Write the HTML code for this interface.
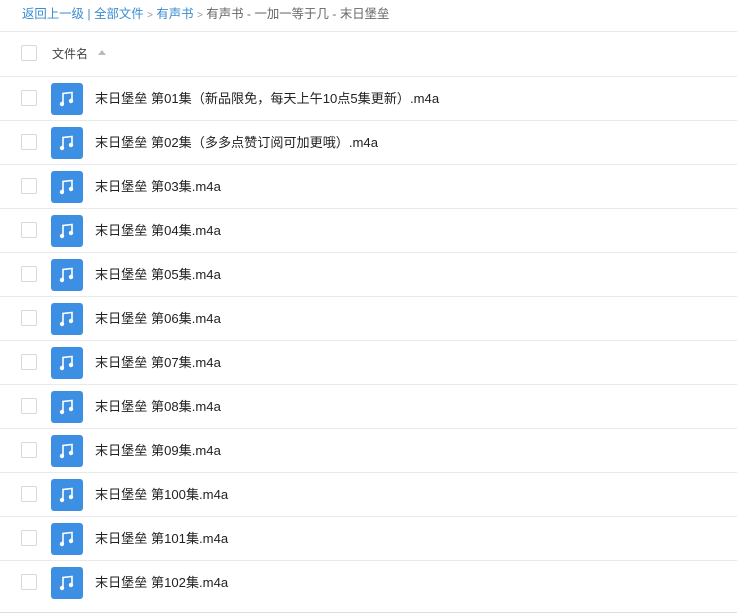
<!DOCTYPE html>
<html><head><meta charset="utf-8"><style>
body{margin:0;background:#fff;font-family:"Liberation Sans","Noto Sans CJK SC",sans-serif;width:737px;height:615px;overflow:hidden;position:relative}
.bc{position:absolute;left:22px;top:5px;font-size:12.4px;color:#666;line-height:18px}
.bc a{color:#3b8cd0;text-decoration:none}
.bc .s{color:#999;font-size:10px}
.hl{position:absolute;left:0;width:737px;height:1px;background:#eaeaea}
.cb{position:absolute;left:21px;width:14px;height:14px;border:1px solid #d8d8d8;border-radius:2px;background:#fff}
.hd{position:absolute;left:52px;top:45px;font-size:12px;color:#444}
.tri{position:absolute;left:98px;top:50px;width:0;height:0;border-left:4px solid transparent;border-right:4px solid transparent;border-bottom:5px solid #bbb}
.ic{position:absolute;left:51px;width:32px;height:32px;background:#3d8fe3;border-radius:3px}
.nm{position:absolute;left:95px;font-size:13.1px;color:#222;line-height:18px}
</style></head><body>
<div class="bc"><a>返回上一级</a> <span style="color:#3b8cd0">|</span> <a>全部文件</a> <span class="s">&gt;</span> <a>有声书</a> <span class="s">&gt;</span> 有声书 - 一加一等于几 - 末日堡垒</div>
<div class="hl" style="top:31px"></div>
<div class="cb" style="top:45px"></div>
<div class="hd">文件名</div><div class="tri"></div>
<div class="hl" style="top:76px"></div>
<div id="rows"></div>
<script>
var names=["第01集（新品限免，每天上午10点5集更新）.m4a","第02集（多多点赞订阅可加更哦）.m4a","第03集.m4a","第04集.m4a","第05集.m4a","第06集.m4a","第07集.m4a","第08集.m4a","第09集.m4a","第100集.m4a","第101集.m4a","第102集.m4a"];
var h="";
names.forEach(function(n,i){var t=77+i*44;
h+='<div class="cb" style="top:'+(t+13)+'px"></div>';
h+='<div class="ic" style="top:'+(t+6)+'px"><svg width="32" height="32" viewBox="0 0 32 32"><path d="M12 21V10.5L21 9.5V18" stroke="#fff" stroke-width="1.6" fill="none"/><circle cx="11" cy="21" r="2.2" fill="#fff"/><circle cx="20" cy="18" r="2.2" fill="#fff"/></svg></div>';
h+='<div class="nm" style="top:'+(t+13)+'px">末日堡垒 '+n+'</div>';
if(i<11)h+='<div class="hl" style="top:'+(t+43)+'px"></div>';});
h+='<div class="hl" style="top:612px;background:#ddd"></div>';
document.getElementById("rows").innerHTML=h;
</script>
</body></html>
